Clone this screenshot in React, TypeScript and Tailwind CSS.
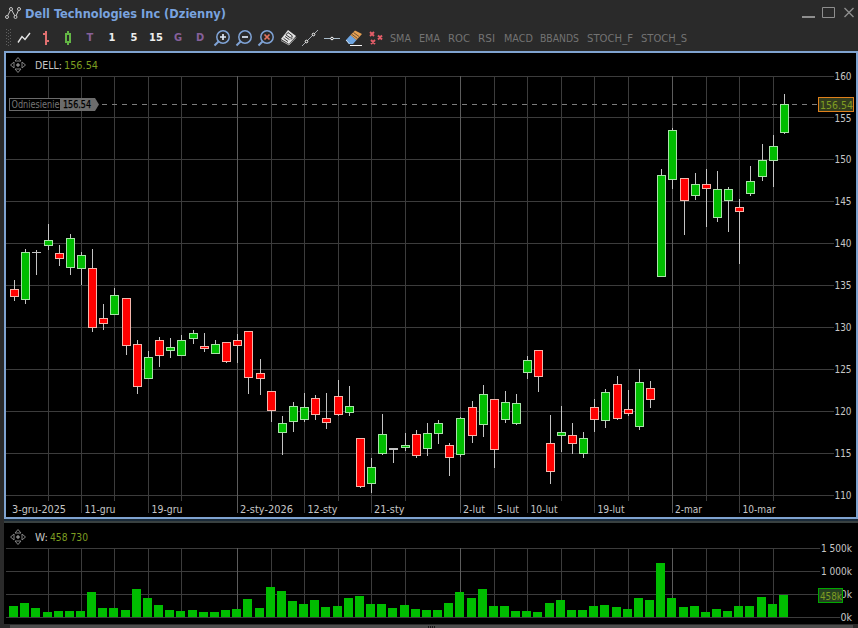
import type { ReactNode } from "react";

type Candle = [x: number, high: number, top: number, bottom: number, low: number, kind: "u" | "d" | "n", volTop: number];

// Pixel rows inside the window, 11px pitch between sessions.
const CANDLES: Candle[] = [
  [14, 280, 289, 297, 301, "d", 606],
  [25, 249, 252, 300, 304, "u", 603],
  [36, 250, 252, 253, 275, "n", 608],
  [48, 224, 240, 246, 250, "u", 612],
  [59, 245, 253, 259, 266, "d", 611],
  [70, 234, 238, 268, 275, "u", 611],
  [81, 252, 255, 269, 285, "u", 611],
  [92, 249, 268, 328, 332, "d", 592],
  [103, 304, 318, 324, 330, "d", 608],
  [114, 288, 295, 315, 315, "u", 608],
  [126, 298, 298, 346, 355, "d", 610],
  [137, 340, 344, 387, 394, "d", 589],
  [148, 351, 357, 379, 379, "u", 598],
  [159, 337, 340, 356, 367, "d", 605],
  [170, 338, 347, 351, 358, "u", 610],
  [181, 335, 340, 356, 356, "u", 611],
  [193, 330, 333, 339, 344, "u", 610],
  [204, 333, 346, 349, 352, "d", 612],
  [215, 340, 344, 354, 354, "u", 612],
  [226, 342, 342, 362, 363, "d", 610],
  [237, 334, 340, 346, 363, "d", 609],
  [248, 331, 331, 378, 394, "d", 599],
  [260, 359, 373, 379, 395, "d", 608],
  [271, 391, 391, 411, 422, "d", 587],
  [282, 416, 423, 433, 455, "u", 591],
  [293, 402, 406, 422, 432, "u", 601],
  [304, 393, 407, 420, 422, "u", 604],
  [315, 395, 398, 415, 420, "d", 600],
  [326, 393, 418, 423, 429, "d", 607],
  [338, 380, 396, 415, 416, "d", 606],
  [349, 386, 406, 413, 416, "u", 598],
  [360, 438, 438, 487, 488, "d", 596],
  [371, 458, 467, 484, 493, "u", 604],
  [382, 414, 434, 454, 455, "u", 604],
  [393, 448, 448, 450, 463, "n", 608],
  [405, 433, 445, 448, 451, "u", 605],
  [416, 430, 434, 456, 458, "d", 609],
  [427, 423, 433, 449, 456, "u", 610],
  [438, 420, 423, 434, 444, "u", 610],
  [449, 443, 445, 458, 476, "d", 603],
  [460, 417, 418, 455, 457, "u", 592],
  [472, 401, 407, 436, 443, "d", 598],
  [483, 385, 394, 425, 437, "u", 589],
  [494, 399, 399, 450, 468, "d", 606],
  [505, 391, 402, 420, 423, "u", 606],
  [516, 394, 403, 424, 425, "u", 611],
  [527, 356, 360, 373, 379, "u", 611],
  [538, 350, 350, 377, 392, "d", 612],
  [550, 415, 443, 472, 484, "d", 603],
  [561, 406, 432, 436, 452, "u", 600],
  [572, 423, 435, 444, 454, "d", 610],
  [583, 432, 438, 454, 458, "u", 610],
  [594, 399, 407, 420, 432, "d", 606],
  [605, 389, 392, 421, 428, "u", 605],
  [617, 376, 384, 419, 420, "d", 607],
  [628, 390, 409, 414, 416, "d", 609],
  [639, 369, 382, 427, 430, "u", 598],
  [650, 381, 388, 400, 408, "d", 600],
  [661, 169, 175, 277, 277, "u", 563],
  [672, 128, 130, 180, 189, "u", 598],
  [684, 178, 178, 201, 235, "d", 607],
  [695, 173, 184, 196, 200, "u", 606],
  [706, 169, 184, 189, 227, "d", 612],
  [717, 171, 189, 218, 222, "u", 609],
  [728, 187, 189, 201, 232, "u", 611],
  [739, 199, 207, 212, 264, "d", 606],
  [750, 166, 181, 194, 196, "u", 606],
  [762, 144, 160, 177, 181, "u", 597],
  [773, 135, 146, 161, 187, "u", 604],
  [784, 94, 104, 133, 134, "u", 595],
];

const PRICE_LEVELS = [76, 117, 159, 201, 243, 285, 327, 369, 411, 453, 495];
const VOLUME_LEVELS = [548, 571, 594, 617];
const GRID_X = [48, 81, 114, 148, 181, 237, 271, 304, 338, 371, 405, 460, 494, 527, 561, 594, 628, 672, 706, 739, 773];
const MONTH_X = [237, 460, 672];

const DATES = [
  { x: 12, label: "3-gru-2025", w: 54 },
  { x: 84.5, label: "11-gru", w: 31 },
  { x: 151.5, label: "19-gru", w: 31 },
  { x: 240, label: "2-sty-2026", w: 53 },
  { x: 307.5, label: "12-sty", w: 30 },
  { x: 374, label: "21-sty", w: 30.5 },
  { x: 463, label: "2-lut", w: 22 },
  { x: 497, label: "5-lut", w: 22 },
  { x: 530.5, label: "10-lut", w: 27 },
  { x: 597.5, label: "19-lut", w: 27 },
  { x: 675, label: "2-mar", w: 27 },
  { x: 742.5, label: "10-mar", w: 33 },
];
const TICKS = [81, 148, 237, 304, 371, 460, 494, 527, 594, 672, 739];

const INDICATORS = [
  { name: "SMA", w: 21, box: 29 },
  { name: "EMA", w: 21, box: 29 },
  { name: "ROC", w: 22, box: 30 },
  { name: "RSI", w: 17, box: 25.5 },
  { name: "MACD", w: 29, box: 36.5 },
  { name: "BBANDS", w: 39, box: 47 },
  { name: "STOCH_F", w: 46, box: 54 },
  { name: "STOCH_S", w: 46, box: 54 },
];

function Label({ x, y, w, fill = "#c6c6c6", children }: { x: number; y: number; w: number; fill?: string; children: string }) {
  return (
    <text x={x} y={y} textLength={w} lengthAdjust="spacingAndGlyphs" fill={fill} fontSize="11">
      {children}
    </text>
  );
}

function MoveHandle() {
  return (
    <svg width="18" height="18" viewBox="0 0 18 18" fill="none" stroke="#858585">
      <circle cx="9" cy="9" r="1.3" fill="#858585" />
      <path d="M6 5 9 1.5 12 5zM6 13 9 16.5 12 13zM5 6 1.5 9 5 12zM13 6 16.500 9 13 12z" />
    </svg>
  );
}

function Cell({ children }: { children: ReactNode }) {
  return <div className="flex h-5 w-[22px] shrink-0 items-center justify-center">{children}</div>;
}

function Letter({ color, children }: { color: string; children: string }) {
  return (
    <Cell>
      <span className={`text-[11px] leading-none font-bold ${color}`}>{children}</span>
    </Cell>
  );
}

function Magnifier({ children }: { children: ReactNode }) {
  return (
    <Cell>
      <svg width="18" height="18" viewBox="0 0 18 18" fill="none">
        <circle cx="10" cy="8" r="6.200" stroke="#7fa3d6" strokeWidth="1.500" />
        <path d="M5.500 12.500 1.500 16.500" stroke="#7fa3d6" strokeWidth="2" />
        {children}
      </svg>
    </Cell>
  );
}

function Toolbar() {
  return (
    <div className="flex h-[25px] items-center pb-[2px] pl-[6px]">
      <svg width="7" height="18" viewBox="0 0 7 18" fill="#5e5e5e">
        {[0, 3, 6, 9, 12, 15].map((y) => (
          <g key={y}>
            <rect x="0" y={y} width="1" height="1" />
            <rect x="2" y={y + 1} width="1" height="1" />
            <rect x="4" y={y} width="1" height="1" />
          </g>
        ))}
      </svg>
      <Cell>
        <svg width="14" height="14" viewBox="0 0 14 14" fill="none" stroke="#e6e6e6" strokeWidth="1.400">
          <path d="M1 11.500 5 5.500 8 8.500 13 2" />
        </svg>
      </Cell>
      <Cell>
        <svg width="10" height="16" viewBox="0 0 10 16" fill="#e07070">
          <path d="M4 1h2v14H4zM2 3h2v2H2zM6 10h2v2H6z" />
        </svg>
      </Cell>
      <Cell>
        <svg width="10" height="16" viewBox="0 0 10 16" fill="none" stroke="#63b545">
          <path d="M5 1v3M5 12v3" strokeWidth="2" />
          <path d="M3 4h4v8H3z" strokeWidth="2" />
        </svg>
      </Cell>
      <Letter color="text-[#86609a]">T</Letter>
      <Letter color="text-[#eeeeee]">1</Letter>
      <Letter color="text-[#eeeeee]">5</Letter>
      <Letter color="text-[#eeeeee]">15</Letter>
      <Letter color="text-[#86609a]">G</Letter>
      <Letter color="text-[#86609a]">D</Letter>
      <Magnifier>
        <path d="M7 8h6M10 5v6" stroke="#dde8f5" strokeWidth="1.700" />
      </Magnifier>
      <Magnifier>
        <path d="M7 8h6" stroke="#dde8f5" strokeWidth="1.700" />
      </Magnifier>
      <Magnifier>
        <path d="M7.500 5.500l5 5M12.500 5.500l-5 5" stroke="#e5745f" strokeWidth="1.700" />
      </Magnifier>
      <Cell>
        <svg width="17" height="17" viewBox="0 0 17 17" fill="none">
          <path d="M8 1 16 7 9 15 1 10z" fill="#e4e4e4" />
          <path d="M8 3.500 12.500 7 10.500 9 6 5.800zM5 7.500l4.500 3.200M3.500 9.300 8 12.500M11 10.500l1.500-1.800" stroke="#343434" />
          <path d="M1 11.500 9 16 16 8.500" stroke="#a5a5a5" />
        </svg>
      </Cell>
      <Cell>
        <svg width="16" height="16" viewBox="0 0 16 16" fill="#2a2a2a" stroke="#c9ced6">
          <path d="M0 16 16 0" strokeWidth="0.8" />
          <circle cx="4.500" cy="11.500" r="1.300" stroke="#fff" />
          <circle cx="11.500" cy="4.500" r="1.300" stroke="#fff" />
        </svg>
      </Cell>
      <Cell>
        <svg width="16" height="16" viewBox="0 0 16 16" fill="#2a2a2a">
          <path d="M0 8.500h16" stroke="#a8bccb" />
          <circle cx="8" cy="8.500" r="1.300" stroke="#fff" />
        </svg>
      </Cell>
      <Cell>
        <svg width="18" height="18" viewBox="0 0 18 18">
          <path d="M1 11 5.500 6 11.500 11 8 15 4 15z" fill="#6ea5e0" />
          <path d="M5.500 6 10 1.500 17 5 11.500 11z" fill="#e5a052" />
          <path d="M6.500 5 12.500 9.500M8.500 3.500 14 7.500" stroke="#4d3d30" strokeWidth="0.8" />
          <path d="M1 11 4.500 15" stroke="#cfe2f5" />
          <path d="M5 16.500h12" stroke="#f5f5f5" />
        </svg>
      </Cell>
      <Cell>
        <svg width="16" height="16" viewBox="0 0 16 16" stroke="#e35d68" strokeWidth="1.900">
          <path d="M2 2l4 4M6 2l-4 4M10 5.500l4 4M14 5.500l-4 4M3 10l4 4M7 10l-4 4" />
        </svg>
      </Cell>
      <div className="flex pl-[3px]">
        {INDICATORS.map(({ name, w, box }) => (
          <svg key={name} width={box} height="16">
            <Label x={0} y={12} w={w} fill="#737373">
              {name}
            </Label>
          </svg>
        ))}
      </div>
    </div>
  );
}

function TitleBar() {
  return (
    <div className="flex h-[26px] items-center pl-[5px]">
      <svg width="17" height="16" viewBox="0 0 17 16" fill="#2a2a2a" stroke="#c8c8c8">
        <path d="M2 12 6 4 10.500 12 14 4" fill="none" />
        <circle cx="2" cy="12" r="1.500" />
        <circle cx="6" cy="4" r="1.500" />
        <circle cx="10.500" cy="12" r="1.500" />
        <circle cx="14" cy="4" r="1.500" />
      </svg>
      <svg width="205" height="20" className="ml-[3px]">
        <text x="0" y="15" textLength="201" lengthAdjust="spacingAndGlyphs" fill="#79a3df" fontSize="12.500" fontWeight="bold">
          Dell Technologies Inc (Dzienny)
        </text>
      </svg>
      <svg width="54" height="14" viewBox="0 0 54 14" className="mr-[3px] ml-auto" fill="none" stroke="#8e8e8e">
        <path d="M1 11h13" strokeWidth="2" />
        <path d="M21.500 1.500h12v10h-12z" />
        <path d="M43.500 2l9 9M52.500 2l-9 9" strokeWidth="1.400" />
      </svg>
    </div>
  );
}

function GridColumns({ top, bottom }: { top: number; bottom: number }) {
  return (
    <>
      {GRID_X.map((x) => (
        <rect key={x} x={x} y={top} width="1" height={bottom - top} fill={MONTH_X.includes(x) ? "#5c5c5c" : "#3c3c3c"} />
      ))}
    </>
  );
}

function PriceChart() {
  return (
    <svg className="block" width="850" height="464" viewBox="6 53 850 464" shapeRendering="crispEdges">
      {PRICE_LEVELS.map((y) => (
        <rect key={y} x="6" y={y} width="828" height="1" fill="#3c3c3c" />
      ))}
      <GridColumns top={76} bottom={501} />
      {TICKS.map((x) => (
        <rect key={x} x={x} y="501" width="1" height="12" fill={MONTH_X.includes(x) ? "#5c5c5c" : "#3c3c3c"} />
      ))}
      <path d="M102 104.500H818" stroke="#7c7c7c" strokeDasharray="5 5" />

      {CANDLES.map(([x, high, top, bottom, low, kind]) => {
        const edge = kind === "n" ? "#c4c4c4" : kind === "u" ? "#a9e2a9" : "#f5b5ab";
        return (
          <g key={x}>
            <rect x={x} y={high} width="1" height={low - high} fill="#c4c4c4" />
            <rect x={x - 4} y={top} width="9" height={bottom - top} fill={edge} />
            {kind !== "n" && (
              <rect
                x={x - 3}
                y={top + 1}
                width="7"
                height={bottom - top - 2}
                fill={kind === "u" ? "#00bd00" : "#ff0000"}
              />
            )}
          </g>
        );
      })}

      {PRICE_LEVELS.map((y, i) => (
        <Label key={y} x={834.5} y={i === 1 ? y + 5 : y + 4} w={17}>
          {String(160 - i * 5)}
        </Label>
      ))}
      {DATES.map(({ x, label, w }) => (
        <Label key={label} x={x} y={513} w={w}>
          {label}
        </Label>
      ))}

      <rect x="9.500" y="98.500" width="51" height="12" fill="#000" stroke="#6a6a6a" />
      <path d="M60 98h35l4 6.500-4 6.500H60z" fill="#6c6c6c" shapeRendering="auto" />
      <text x="11.500" y="108" fontSize="10" fill="#777" textLength="48" lengthAdjust="spacingAndGlyphs">
        Odniesienie
      </text>
      <text x="63" y="108" fontSize="10" fill="#000" stroke="#000" strokeWidth="0.250" textLength="28" lengthAdjust="spacingAndGlyphs">
        156.54
      </text>

      <rect x="818.500" y="97.500" width="35" height="14" fill="#333c1e" stroke="#e0801c" />
      <Label x={820} y={109} w={33} fill="#7f9c22">
        156.54
      </Label>
    </svg>
  );
}

function VolumeChart() {
  return (
    <svg className="block" width="854" height="101" viewBox="4 523 854 101" shapeRendering="crispEdges">
      {VOLUME_LEVELS.map((y) => (
        <rect key={y} x="6" y={y} width={y === 617 ? 834 : 814} height="1" fill="#3c3c3c" />
      ))}
      <GridColumns top={548} bottom={617} />
      {CANDLES.map(([x, , , , , , volTop]) => (
        <rect key={x} x={x - 5} y={volTop} width="9" height={617 - volTop} fill="#00bd00" />
      ))}
      <Label x={821} y={552} w={31}>1 500k</Label>
      <Label x={821} y={575} w={31}>1 000k</Label>
      <Label x={829} y={598} w={23}>500k</Label>
      <Label x={840.5} y={621} w={11.5}>0k</Label>
      <rect x="818.500" y="588.500" width="24" height="14" fill="#254020" stroke="#00a800" />
      <Label x={820} y={600} w={22} fill="#7f9c22">458k</Label>
    </svg>
  );
}

function Legend({ name, nameWidth, value, valueWidth }: { name: string; nameWidth: number; value: string; valueWidth: number }) {
  return (
    <div className="absolute flex items-center gap-2">
      <MoveHandle />
      <svg width="80" height="18">
        <Label x={0} y={13} w={nameWidth}>{name}</Label>
        <Label x={nameWidth + 2} y={13} w={valueWidth} fill="#7c9c20">{value}</Label>
      </svg>
    </div>
  );
}

export default function App() {
  return (
    <div className="flex h-[628px] w-[858px] flex-col overflow-hidden bg-[#2a2a2a] font-['DejaVu_Sans_Condensed','DejaVu_Sans',sans-serif] [font-stretch:condensed]">
      <TitleBar />
      <Toolbar />
      <div className="ml-1 h-[468px] w-[854px] shrink-0 border-2 border-[#7fa3d0] bg-black">
        <div className="pt-[3px] pl-[3px]">
          <Legend name="DELL:" nameWidth={27} value="156.54" valueWidth={34} />
        </div>
        <div className="-mt-[3px]">
          <PriceChart />
        </div>
      </div>
      <div className="ml-1 h-1 shrink-0 border-t-2 border-b-2 border-t-[#1a2a38] border-b-[#394141]" />
      <div className="ml-1 h-[101px] shrink-0 bg-black">
        <div className="pt-[5px] pl-[5px]">
          <Legend name="W:" nameWidth={13} value="458 730" valueWidth={38} />
        </div>
        <div className="-mt-[5px]">
          <VolumeChart />
        </div>
      </div>
      <div className="mt-px ml-[10px] flex h-[3px] w-[843px] justify-center gap-px bg-[#4c4c4c] pt-px">
        <div className="h-2 w-px bg-[#181818]" />
        <div className="h-2 w-px bg-[#181818]" />
        <div className="h-2 w-px bg-[#181818]" />
        <div className="h-2 w-px bg-[#181818]" />
      </div>
    </div>
  );
}
